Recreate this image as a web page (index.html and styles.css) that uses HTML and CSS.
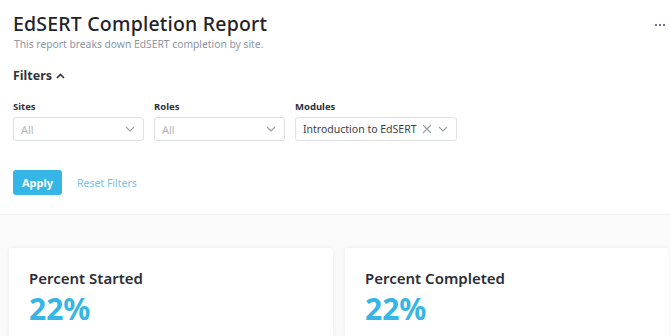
FILE: index.html
```html
<!DOCTYPE html>
<html>
<head>
<meta charset="utf-8">
<link rel="stylesheet" href="styles.css">
</head>
<body>
<div class="top">
  <header class="head">
    <div>
      <h1 class="title">EdSERT Completion Report</h1>
      <p class="sub">This report breaks down EdSERT completion by site.</p>
    </div>
    <div class="dots"><span></span><span></span><span></span></div>
  </header>
  <div class="filters-toggle">Filters
    <svg width="9" height="6" viewBox="0 0 9 6"><path d="M1 5 L4.5 1.5 L8 5" fill="none" stroke="#333" stroke-width="1.6"/></svg>
  </div>
  <div class="fields">
    <div class="field w1">
      <label class="lbl">Sites</label>
      <div class="select"><span class="ph">All</span><svg class="chev" width="10" height="6" viewBox="0 0 10 6"><path d="M1 1 L5 5 L9 1" fill="none" stroke="#9aa0a8" stroke-width="1.2"/></svg></div>
    </div>
    <div class="field w1">
      <label class="lbl">Roles</label>
      <div class="select"><span class="ph">All</span><svg class="chev" width="10" height="6" viewBox="0 0 10 6"><path d="M1 1 L5 5 L9 1" fill="none" stroke="#9aa0a8" stroke-width="1.2"/></svg></div>
    </div>
    <div class="field w2">
      <label class="lbl">Modules</label>
      <div class="select"><span class="val">Introduction to EdSERT</span>
        <span class="icons">
          <svg width="10" height="10" viewBox="0 0 10 10"><path d="M1 1 L9 9 M9 1 L1 9" fill="none" stroke="#9aa0a8" stroke-width="1.2"/></svg>
          <svg width="10" height="6" viewBox="0 0 10 6"><path d="M1 1 L5 5 L9 1" fill="none" stroke="#9aa0a8" stroke-width="1.2"/></svg>
        </span>
      </div>
    </div>
  </div>
  <div class="actions">
    <button class="apply">Apply</button>
    <a class="reset">Reset Filters</a>
  </div>
</div>
<main class="bottom">
  <section class="card">
    <h2 class="card-title">Percent Started</h2>
    <div class="big">22%</div>
  </section>
  <section class="card">
    <h2 class="card-title">Percent Completed</h2>
    <div class="big">22%</div>
  </section>
</main>
</body>
</html>
```
FILE: styles.css
```css
* { box-sizing: border-box; }
html, body { margin: 0; padding: 0; }
body {
  font-family: "Noto Sans", "Open Sans", sans-serif;
  color: #21252b;
  background: #fbfbfb;
  width: 670px;
  height: 336px;
  overflow: hidden;
}
.top {
  background: #fff;
  padding: 11px 0 19px 13px;
  border-bottom: 1px solid #f0f0f0;
}
.head {
  display: flex;
  justify-content: space-between;
  align-items: flex-start;
}
.title {
  margin: 0;
  font-size: 19.5px;
  font-weight: 500;
  line-height: 26px;
  letter-spacing: 0.2px;
  color: #1f232a;
}
.sub {
  margin: 0 0 0 1px;
  font-size: 10.3px;
  line-height: 14px;
  color: #8d96a4;
}
.dots {
  display: flex;
  gap: 2px;
  margin: 13px 5px 0 0;
}
.dots span {
  width: 2px; height: 2px;
  background: #6b7585;
}
.filters-toggle {
  margin-top: 16px;
  font-size: 12.5px;
  font-weight: 700;
  color: #30343a;
  display: flex;
  align-items: center;
  gap: 4px;
  line-height: 17px;
}
.filters-toggle svg { margin-top: 1px; }
.fields {
  display: flex;
  gap: 10px;
  margin-top: 16px;
}
.field { display: flex; flex-direction: column; }
.w1 { width: 131px; }
.w2 { width: 162px; }
.lbl {
  font-size: 9.5px;
  font-weight: 700;
  color: #2d3138;
  line-height: 13px;
  margin-bottom: 4px;
}
.select {
  height: 24px;
  border: 1px solid #dfe1e4;
  border-radius: 3px;
  display: flex;
  align-items: center;
  justify-content: space-between;
  padding: 0 8px 0 7px;
  font-size: 11px;
}
.ph { color: #b4b8be; }
.val { color: #3a3f46; font-size: 10.5px; }
.icons { display: flex; align-items: center; gap: 6px; }
.actions {
  display: flex;
  align-items: center;
  gap: 15px;
  margin-top: 29px;
}
.apply {
  width: 49px;
  height: 25px;
  border: 0;
  border-radius: 3px;
  background: #36b5e7;
  color: #fff;
  font-family: inherit;
  font-size: 11px;
  font-weight: 700;
  padding: 0;
}
.reset {
  font-size: 10.5px;
  color: #75c3ea;
}
.bottom {
  display: grid;
  grid-template-columns: 324px 324px;
  gap: 12px;
  padding: 33px 0 0 9px;
}
.card {
  background: #fff;
  border-radius: 3px 3px 0 0;
  box-shadow: 0 0 5px rgba(0,0,0,0.08);
  padding: 20px 20px 0 20px;
  height: 90px;
}
.card-title {
  margin: 0;
  font-size: 15px;
  font-weight: 600;
  line-height: 20px;
  color: #2a2e35;
}
.big {
  margin-top: 4px;
  font-size: 30px;
  font-weight: 700;
  line-height: 34px;
  color: #36b5e7;
}
```
